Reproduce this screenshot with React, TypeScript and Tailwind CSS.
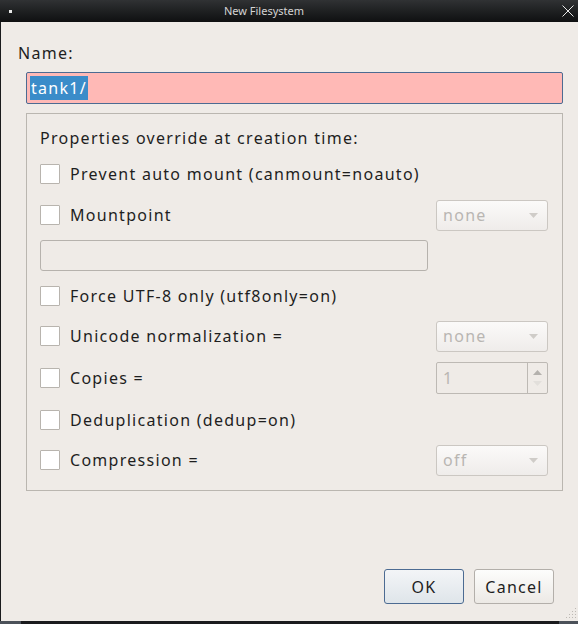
import { ReactNode } from "react";

function CheckBox() {
  return <div className="w-5 h-5 shrink-0 bg-white border border-[#b8b4ae] rounded-[1px]" />;
}

function Combo({ value }: { value: string }) {
  return (
    <div className="w-[112px] h-[31px] shrink-0 flex items-center pl-[6px] pr-[9px] rounded-[3px] border border-[#cbc7c2] bg-gradient-to-b from-[#fbfaf9] to-[#efecea] text-[#b9b6b2]">
      <span className="flex-1">{value}</span>
      <svg width="9" height="5" viewBox="0 0 9 5">
        <path d="M0 0 L9 0 L4.5 5 Z" fill="#cfccc8" />
      </svg>
    </div>
  );
}

function Spin({ value }: { value: string }) {
  return (
    <div className="w-[112px] h-[32px] shrink-0 flex rounded-[2px] border border-[#bdb9b4] bg-[#efebe7] text-[#b9b6b2]">
      <span className="flex-1 flex items-center pl-[6px]">{value}</span>
      <div className="w-[20px] border-l border-[#bdb9b4] flex flex-col items-center justify-between py-[7px]">
        <svg width="9" height="5" viewBox="0 0 9 5">
          <path d="M0 5 L9 5 L4.5 0 Z" fill="#b4b1ad" />
        </svg>
        <svg width="9" height="5" viewBox="0 0 9 5">
          <path d="M0 0 L9 0 L4.5 5 Z" fill="#e2dfdb" />
        </svg>
      </div>
    </div>
  );
}

function Row({ label, right, className }: { label: string; right?: ReactNode; className?: string }) {
  return (
    <div className={`h-[32px] flex items-center ${className ?? ""}`}>
      <CheckBox />
      <span className="ml-[10px] flex-1 text-[#1e1e1e]">{label}</span>
      {right}
    </div>
  );
}

export default function App() {
  return (
    <div
      className="w-[578px] h-[624px] flex flex-col bg-[#1a1b1d] overflow-hidden text-[16px] leading-[22px] tracking-[0.08em]"
      style={{ fontFamily: '"Noto Sans", "Open Sans", sans-serif' }}
    >
      {/* title bar */}
      <div className="h-[22px] shrink-0 flex items-center bg-gradient-to-b from-[#303234] to-[#0f1011] tracking-normal">
        <div className="ml-[9px] w-[3px] h-[3px] bg-[#e8e8e8]" />
        <div className="flex-1 text-center text-[11px] leading-[22px] text-[#d4d4d4] pr-[46px]">New Filesystem</div>
        <svg width="12" height="12" viewBox="0 0 12 12" className="mr-[4px]">
          <path d="M0.5 0.5 L11.5 11.5 M11.5 0.5 L0.5 11.5" stroke="#e8e8e8" strokeWidth="1" />
        </svg>
      </div>

      {/* body */}
      <div className="h-[599px] shrink-0 ml-px bg-[#efebe7] relative flex flex-col pl-[17px] pr-[15px]">
        <div className="mt-[20px] text-[#1e1e1e]">Name:</div>
        <div className="mt-[8px] ml-[8px] h-[32px] rounded-[2px] border border-[#4c6b92] bg-[#ffb9b6] flex items-center pl-[3px]">
          <span className="bg-[#3a8cc9] text-white px-[1px] leading-[24px]">tank1/</span>
        </div>

        <div className="mt-[9px] ml-[8px] h-[378px] border border-[#bab6b0] pl-[13px] pr-[14px] pt-[13px] flex flex-col">
          <div className="text-[#1e1e1e]">Properties override at creation time:</div>
          <Row className="mt-[9px]" label="Prevent auto mount (canmount=noauto)" />
          <Row className="mt-[9px]" label="Mountpoint" right={<Combo value="none" />} />
          <div className="mt-[9px] w-[388px] h-[31px] rounded-[3px] border border-[#b6b2ad] bg-[#efebe7]" />
          <Row className="mt-[9px]" label="Force UTF-8 only (utf8only=on)" />
          <Row className="mt-[8px]" label="Unicode normalization =" right={<Combo value="none" />} />
          <Row className="mt-[10px]" label="Copies =" right={<Spin value="1" />} />
          <Row className="mt-[10px]" label="Deduplication (dedup=on)" />
          <Row className="mt-[8px]" label="Compression =" right={<Combo value="off" />} />
        </div>

        <div className="mt-auto mb-[17px] flex justify-end gap-[10px] pr-[9px]">
          <button className="w-[80px] h-[35px] rounded-[3px] border border-[#4c6b92] bg-gradient-to-b from-[#f3f5f7] to-[#dfe5ea] text-[#1e1e1e]">
            OK
          </button>
          <button className="w-[80px] h-[35px] rounded-[3px] border border-[#b3afaa] bg-gradient-to-b from-[#fdfdfc] to-[#ece9e5] text-[#1e1e1e]">
            Cancel
          </button>
        </div>

        {/* resize grip */}
        <svg width="12" height="12" viewBox="0 0 12 12" className="absolute right-[1px] bottom-[2px]">
          {[
            [10, 1], [10, 4], [7, 4], [10, 7], [7, 7], [4, 7], [10, 10], [7, 10], [4, 10], [1, 10],
          ].map(([x, y], i) => (
            <rect key={i} x={x} y={y} width="1" height="1" fill="#bdb9b4" />
          ))}
        </svg>
      </div>

      {/* taskbar edge */}
      <div className="flex-1 flex">
        <div className="w-[21px] bg-[#4b5159]" />
        <div className="flex-1 bg-[#1a1b1d]" />
        <div className="w-[19px] bg-[#4b5159]" />
      </div>
    </div>
  );
}
